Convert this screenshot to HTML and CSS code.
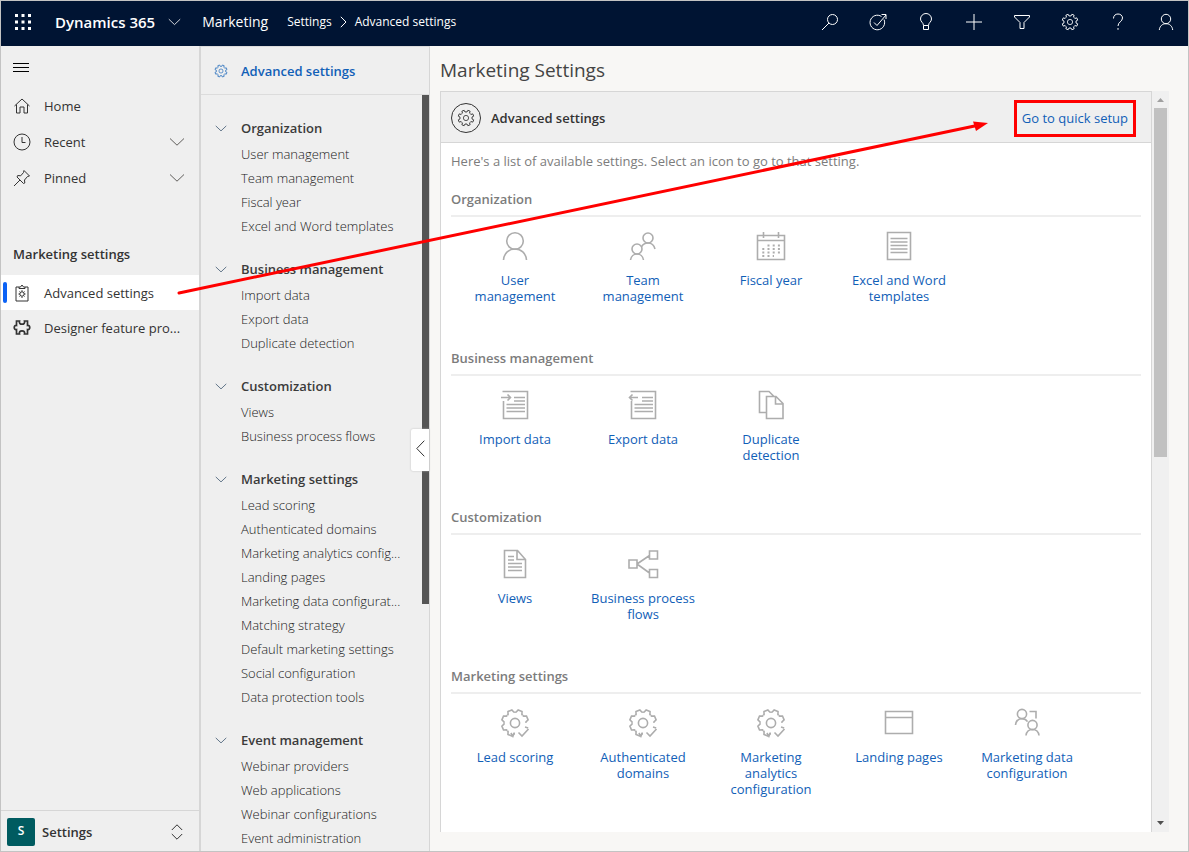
FILE: index.html
```html
<!DOCTYPE html>
<html lang="en">
<head>
<meta charset="utf-8">
<title>Advanced settings - Dynamics 365 Marketing</title>
<link rel="stylesheet" href="styles.css">
</head>
<body>
<svg class="sprite" aria-hidden="true">
  <defs>
    <path id="tooth" d="M-2.9-6.9-1.7-7.2-1.5-9.6H1.5L1.7-7.2 2.9-6.9"/>
    <path id="cog" d="M-4.1-10-3.1-10.6-2.1-13.3H2.1L3.1-10.6 4.1-10"/>
    <symbol id="i-gear" viewBox="-11 -11 22 22">
      <use href="#tooth" transform="rotate(22.5)"/><use href="#tooth" transform="rotate(67.5)"/><use href="#tooth" transform="rotate(112.5)"/><use href="#tooth" transform="rotate(157.5)"/><use href="#tooth" transform="rotate(202.5)"/><use href="#tooth" transform="rotate(247.5)"/><use href="#tooth" transform="rotate(292.5)"/><use href="#tooth" transform="rotate(337.5)"/>
      <circle r="3.2"/>
    </symbol>
    <symbol id="i-cog-check" viewBox="-15 -15 30 30">
      <use href="#cog" transform="rotate(22.5)"/><use href="#cog" transform="rotate(67.5)"/><use href="#cog" transform="rotate(202.5)"/><use href="#cog" transform="rotate(247.5)"/><use href="#cog" transform="rotate(292.5)"/><use href="#cog" transform="rotate(337.5)"/>
      <path d="M10 4.100 13.200 5M-4.100 10-2.100 13.300-.6 9.500M3.500 9.500 7 13 13.500 6"/>
      <circle r="4.6"/>
    </symbol>
    <symbol id="i-down" viewBox="0 0 16 8"><path d="M1 .5 8 7.2 15 .5"/></symbol>
    <symbol id="i-user" viewBox="0 0 30 30"><circle cx="15" cy="10" r="8.3"/><path d="M3.5 29C4 22 9 18 15 18s11 4 11.500 11"/></symbol>
    <symbol id="i-team" viewBox="0 0 30 30"><circle cx="20" cy="7" r="5"/><circle cx="9" cy="18" r="5"/><path d="M2.500 29c.5-4 3.500-6 6.500-6s6 2 6.500 6M13.500 16c1-2.500 3.500-4 6.500-4s6 2 7 6"/></symbol>
    <symbol id="i-calendar" viewBox="0 0 30 30"><path d="M1.500 4.500h27v24h-27zM1.500 9.500h27M7.500 1v6M22.500 1v6"/><path stroke-dasharray="2 3.200" stroke-width="2" d="M11.500 14.500H24M6.300 18H24M6.300 21.500H24M6.300 25H18"/></symbol>
    <symbol id="i-doc" viewBox="0 0 30 30"><path d="M3.500 1.500h23v27h-23zM6.500 7.500h17M6.500 11h17M6.500 14.500h17M6.500 18h17M6.500 21.500h17"/></symbol>
    <symbol id="i-import" viewBox="0 0 30 30"><path d="M2.500 1.500h25v27h-24V11M1 7.500h9M7.500 4.500l3 3-3 3M14 7.500h11M14 11h11M6.500 14.500H25M6.500 18H25M6.500 21.500H25"/></symbol>
    <symbol id="i-export" viewBox="0 0 30 30"><path d="M2.500 1.500h25v27h-24V11M2 7.500h8M4.500 4.500l-3 3 3 3M14 7.500h11M14 11h11M6.500 14.500H25M6.500 18H25M6.500 21.500H25"/></symbol>
    <symbol id="i-copy" viewBox="0 0 30 30"><path d="M10 22.500H3.500v-21H13l5 5M10.500 28.500v-22h9.500l7 7v15zM19.500 7v7H27"/></symbol>
    <symbol id="i-page" viewBox="0 0 30 30"><path d="M4.500 1.500h13l8 9v18h-21zM17 2v8.500h8M8 7.500h6M8 11h6M8 14.500h14M8 18h14M8 21.500h14"/></symbol>
    <symbol id="i-flow" viewBox="0 0 32 30"><path d="M2 11h8v8H2zM22.500 2h8v8h-8zM22.500 20.500h8v8h-8zM10 15l12.500-8.500M10 15l12.500 9"/></symbol>
    <symbol id="i-window" viewBox="0 0 30 30"><path d="M1.500 3.500h27v22h-27zM1.500 9.500h27"/></symbol>
    <symbol id="i-userdata" viewBox="0 0 30 30"><circle cx="10" cy="6" r="4.600"/><circle cx="20.500" cy="17" r="4.600"/><path d="M3.500 17c.5-4 3-6.300 6.500-6.300 2.500 0 4.500 1 5.500 3M14 27.500c.5-4 3-6 6.500-6s6 2 6.500 6M17.500 3.500h6.500v7"/></symbol>
  </defs>
</svg>

<header class="topbar">
  <button class="waffle" aria-label="App launcher"><svg width="16" height="16" viewBox="0 0 16 16"><path d="M0 0h3v3H0zM6.500 0h3v3h-3zM13 0h3v3h-3zM0 6.500h3v3H0zM6.500 6.500h3v3h-3zM13 6.500h3v3h-3zM0 13h3v3H0zM6.500 13h3v3h-3zM13 13h3v3h-3z" fill="currentColor"/></svg></button>
  <button class="brand">Dynamics 365 <svg class="line" width="13" height="8"><use href="#i-down"/></svg></button>
  <a class="app" href="#">Marketing</a>
  <nav class="crumbs" aria-label="Breadcrumb">
    <a href="#">Settings</a>
    <svg class="line" width="7" height="12" viewBox="0 0 7 12"><path d="M.8.800 6 6 .8 11.200"/></svg>
    <a href="#">Advanced settings</a>
  </nav>
  <div class="actions">
    <button aria-label="Search"><svg class="line" width="18" height="18" viewBox="0 0 18 18"><circle cx="11.500" cy="6.500" r="5"/><path d="M8 10 1 17"/></svg></button>
    <button aria-label="Assistant"><svg class="line" width="18" height="18" viewBox="0 0 18 18"><path d="M12.500 3.500A7.300 7.300 0 1 0 15 6.500M5 9.500l3 3L17 2M12.500 1.500H17V6"/></svg></button>
    <button aria-label="Tips"><svg class="line" width="18" height="18" viewBox="0 0 18 18"><path d="M6.500 12.500c0-3-3-3.500-3-6.500a5.500 5.500 0 0 1 11 0c0 3-3 3.500-3 6.500v4h-5v-4h5"/></svg></button>
    <button aria-label="New"><svg class="line" width="18" height="18" viewBox="0 0 18 18"><path d="M9 1v16M1 9h16"/></svg></button>
    <button aria-label="Filter"><svg class="line" width="18" height="18" viewBox="0 0 18 18"><path d="M1.500 2.500h15v1.500L11 9.500v6H7v-6L1.500 4z"/></svg></button>
    <button aria-label="Settings"><svg class="line gear" width="18" height="18"><use href="#i-gear"/></svg></button>
    <button aria-label="Help"><svg class="line" width="18" height="18" viewBox="0 0 18 18"><path d="M4.500 5.500C4.500 2.500 6.500 1 9 1s4.500 1.600 4.500 4c0 3.500-4.500 4-4.500 8M9 15v1.800"/></svg></button>
    <button aria-label="Account"><svg class="line" width="18" height="18" viewBox="0 0 18 18"><circle cx="9" cy="6" r="4.700"/><path d="M2.300 17c.4-4 3.200-6.300 6.700-6.300s6.300 2.300 6.700 6.300"/></svg></button>
  </div>
</header>

<div class="shell">
  <aside class="sitemap">
    <button class="burger" aria-label="Toggle navigation"><svg class="line" width="16" height="11" viewBox="0 0 16 11"><path d="M0 1.500h16M0 5.500h16M0 9.500h16"/></svg></button>
    <nav class="site-links">
      <a class="site-link" href="#"><svg class="line" width="18" height="18" viewBox="0 0 18 18"><path d="M1.500 9 9 2l7.500 7M3.500 7.500v8.500h3.500v-6h4v6h3.500V7.500"/></svg><span>Home</span></a>
      <a class="site-link" href="#"><svg class="line" width="18" height="18" viewBox="0 0 18 18"><circle cx="9" cy="9" r="8"/><path d="M9 4v5.500h3.500"/></svg><span>Recent</span><svg class="line soft" width="16" height="8"><use href="#i-down"/></svg></a>
      <a class="site-link" href="#"><svg class="line" width="18" height="18" viewBox="0 0 18 18"><path d="m11 1.500 5.500 5.500-2 .5-3 3.500.3 3-1.300.5L4 8l.7-1.500 3 .3L10.500 3.500zM7 11l-6 6"/></svg><span>Pinned</span><svg class="line soft" width="16" height="8"><use href="#i-down"/></svg></a>
    </nav>
    <h2 class="site-heading">Marketing settings</h2>
    <nav>
      <a class="site-link tight current" href="#" aria-current="page"><svg class="line" width="18" height="18" viewBox="0 0 18 18"><path d="M6 3H3v14h12V3h-3M6 4.500V3h1.500L9 1l1.500 2H12v1.500zM9 6.200v1.500M9 12.500V14M5.500 10H7M11 10h1.500M6.500 7.500l1 1M10.500 11.500l1 1M11.500 7.500l-1 1M7.500 11.500l-1 1"/><circle cx="9" cy="10" r="2.200"/></svg><span>Advanced settings</span></a>
      <a class="site-link tight" href="#"><svg class="line bold" width="18" height="18" viewBox="0 0 18 18"><path d="M3.500 2h3c-.5 2 .5 3.200 2.500 3.200S12 4 11.500 2h3v4.500c3-.8 3 4.800 0 4v4.500h-3c.5-2-.5-3.200-2.500-3.200S6 13 6.500 15h-3v-4.500c-3 .8-3-4.800 0-4z"/></svg><span>Designer feature pro...</span></a>
    </nav>
    <button class="area"><span class="area-badge">S</span><span class="area-name">Settings</span><svg class="line" width="12" height="16" viewBox="0 0 12 16"><path d="M.8 6 6 .8 11.200 6M.8 10 6 15.200 11.200 10"/></svg></button>
  </aside>

  <aside class="subnav">
    <a class="subnav-title" href="#"><svg class="line gear" width="14" height="14"><use href="#i-gear"/></svg>Advanced settings</a>
    <div class="subnav-body">
      <nav class="groups">
        <section class="group">
          <h3><svg class="line" width="12" height="7"><use href="#i-down"/></svg>Organization</h3>
          <a href="#">User management</a><a href="#">Team management</a><a href="#">Fiscal year</a><a href="#">Excel and Word templates</a>
        </section>
        <section class="group">
          <h3><svg class="line" width="12" height="7"><use href="#i-down"/></svg>Business management</h3>
          <a href="#">Import data</a><a href="#">Export data</a><a href="#">Duplicate detection</a>
        </section>
        <section class="group">
          <h3><svg class="line" width="12" height="7"><use href="#i-down"/></svg>Customization</h3>
          <a href="#">Views</a><a href="#">Business process flows</a>
        </section>
        <section class="group">
          <h3><svg class="line" width="12" height="7"><use href="#i-down"/></svg>Marketing settings</h3>
          <a href="#">Lead scoring</a><a href="#">Authenticated domains</a><a href="#">Marketing analytics config...</a><a href="#">Landing pages</a><a href="#">Marketing data configurat...</a><a href="#">Matching strategy</a><a href="#">Default marketing settings</a><a href="#">Social configuration</a><a href="#">Data protection tools</a>
        </section>
        <section class="group">
          <h3><svg class="line" width="12" height="7"><use href="#i-down"/></svg>Event management</h3>
          <a href="#">Webinar providers</a><a href="#">Web applications</a><a href="#">Webinar configurations</a><a href="#">Event administration</a>
        </section>
      </nav>
      <div class="dark-scroll"></div>
      <button class="collapse" aria-label="Collapse"><svg class="line" width="9" height="17" viewBox="0 0 9 17"><path d="M8.300.7.8 8.500l7.500 7.800"/></svg></button>
    </div>
  </aside>

  <main class="main">
    <h1>Marketing Settings</h1>
    <div class="viewport">
      <div class="panel">
        <div class="panel-head">
          <span class="ring"><svg class="line gear" width="18" height="18"><use href="#i-gear"/></svg></span>
          <h2>Advanced settings</h2>
          <a class="quick" href="#">Go to quick setup</a>
        </div>
        <div class="panel-body">
          <p class="intro">Here's a list of available settings. Select an icon to go to that setting.</p>
          <section class="tiles"><h3>Organization</h3>
            <div class="row">
              <a href="#"><svg width="30" height="30"><use href="#i-user"/></svg>User management</a>
              <a href="#"><svg width="30" height="30"><use href="#i-team"/></svg>Team management</a>
              <a href="#"><svg width="30" height="30"><use href="#i-calendar"/></svg>Fiscal year</a>
              <a href="#"><svg width="30" height="30"><use href="#i-doc"/></svg>Excel and Word templates</a>
            </div>
          </section>
          <section class="tiles"><h3>Business management</h3>
            <div class="row">
              <a href="#"><svg width="30" height="30"><use href="#i-import"/></svg>Import data</a>
              <a href="#"><svg width="30" height="30"><use href="#i-export"/></svg>Export data</a>
              <a href="#"><svg width="30" height="30"><use href="#i-copy"/></svg>Duplicate detection</a>
            </div>
          </section>
          <section class="tiles"><h3>Customization</h3>
            <div class="row">
              <a href="#"><svg width="30" height="30"><use href="#i-page"/></svg>Views</a>
              <a href="#"><svg width="32" height="30"><use href="#i-flow"/></svg>Business process flows</a>
            </div>
          </section>
          <section class="tiles"><h3>Marketing settings</h3>
            <div class="row">
              <a href="#"><svg width="30" height="30"><use href="#i-cog-check"/></svg>Lead scoring</a>
              <a href="#"><svg width="30" height="30"><use href="#i-cog-check"/></svg>Authenticated domains</a>
              <a href="#"><svg width="30" height="30"><use href="#i-cog-check"/></svg>Marketing analytics configuration</a>
              <a href="#"><svg width="30" height="30"><use href="#i-window"/></svg>Landing pages</a>
              <a href="#"><svg width="30" height="30"><use href="#i-userdata"/></svg>Marketing data configuration</a>
            </div>
          </section>
        </div>
      </div>
      <div class="scrollbar">
        <svg class="up" width="7" height="4" viewBox="0 0 7 4"><path d="M0 4 3.500 0 7 4z"/></svg>
        <div class="thumb"></div>
        <svg class="dn" width="7" height="4" viewBox="0 0 7 4"><path d="M0 0h7L3.500 4z"/></svg>
      </div>
    </div>
  </main>
</div>
<svg class="pointer" width="812" height="180" viewBox="0 0 812 180" aria-hidden="true"><path d="M2 174 800 6.500" stroke="#f00" stroke-width="3" stroke-linecap="round"/><path d="M811 4 796 2.500 799 12z" fill="#f00"/></svg>
</body>
</html>
```
FILE: styles.css
```css
* { box-sizing: border-box; }
body {
  margin: 0;
  height: 100vh;
  display: flex;
  flex-direction: column;
  position: relative;
  overflow: hidden;
  border: 1px solid #c3c3c3;
  background: #f8f7f5;
  color: #333;
  font: 13px/20px "Open Sans", "Noto Sans", sans-serif;
}
h1, h2, h3, p { margin: 0; font-weight: 600; font-size: 13px; }
a { color: inherit; text-decoration: none; }
button { border: 0; padding: 0; background: none; color: inherit; font: inherit; }
svg { flex: none; display: block; }
.sprite { position: absolute; width: 0; height: 0; }
.line { fill: none; stroke: currentColor; stroke-width: 1; }
.bold { stroke-width: 1.7; }
.soft { color: #605e5c; }

.topbar {
  flex: none;
  height: 45px;
  padding: 0 0 3px 14px;
  display: flex;
  align-items: center;
  background: #001433;
  color: #fff;
}
.waffle { margin-right: 24px; }
.brand { display: flex; align-items: center; gap: 13px; font-size: 15px; font-weight: 600; }
.app { margin-left: 21px; font-size: 14px; }
.crumbs { margin-left: 19px; display: flex; align-items: center; gap: 8px; font-size: 12px; }
.actions { margin-left: auto; height: 40px; display: flex; gap: 4px; }
.actions button { width: 44px; display: grid; place-items: center; }

.shell { flex: 1; min-height: 0; display: flex; }
.sitemap {
  flex: none;
  width: 200px;
  display: flex;
  flex-direction: column;
  background: #efefef;
  border-right: 2px solid #d6d6d6;
}
.burger { height: 42px; padding-left: 12px; text-align: left; color: #000; }
.site-link { height: 36px; padding: 0 14px 0 12px; display: flex; align-items: center; gap: 13px; }
.site-link span { flex: 1; white-space: nowrap; }
.tight { height: 35px; }
.current { background: #fff; position: relative; }
.current::before { content: ""; position: absolute; left: 2px; top: 7px; width: 4px; height: 21px; border-radius: 2px; background: #0b62f5; }
.site-heading { margin: 40px 0 3px; padding-left: 12px; line-height: 36px; }
.area {
  margin-top: auto;
  height: 41px;
  padding: 1px 16px 0 6px;
  display: flex;
  align-items: center;
  gap: 7px;
  border-top: 1px solid #d6d6d6;
  font-weight: 600;
}
.area-badge { width: 28px; height: 28px; border-radius: 2px; background: #005b60; color: #fff; font-size: 12px; line-height: 26px; }
.area-name { flex: 1; text-align: left; }

.subnav {
  flex: none;
  width: 229px;
  display: flex;
  flex-direction: column;
  background: #efefef;
  border-right: 1px solid #d6d6d6;
  border-top: 1px solid #dcdcdc;
}
.subnav-title {
  flex: none;
  height: 48px;
  padding: 0 0 0 13px;
  display: flex;
  align-items: center;
  gap: 13px;
  border-bottom: 1px solid #dcdcdc;
  color: #1160b7;
  font-weight: 600;
}
.subnav-body { flex: 1; min-height: 0; display: flex; position: relative; }
.groups { flex: 1; padding: 19px 0 0 14px; overflow: hidden; }
.group { margin-bottom: 17px; }
.group h3 { display: flex; align-items: center; gap: 14px; height: 28px; color: #3b3b3b; }
.group h3 svg { color: #5f7388; stroke-width: 1.3; }
.group a { display: block; padding-left: 26px; line-height: 24px; font-weight: 300; white-space: nowrap; color: #222; }
.dark-scroll { width: 7px; height: 509px; background: #555; }
.collapse {
  position: absolute;
  right: 0;
  top: 334px;
  width: 18px;
  height: 42px;
  padding-bottom: 4px;
  display: grid;
  place-items: center;
  background: #fff;
  border-radius: 2px 0 0 2px;
  box-shadow: 0 0 2px #bbb;
}

.main { flex: 1; min-width: 0; display: flex; flex-direction: column; padding: 0 19px 19px 10px; }
h1 { height: 45px; line-height: 48px; font-size: 19px; font-weight: 400; color: #444; }
.viewport { flex: 1; min-height: 0; display: flex; }
.panel {
  flex: 1;
  min-width: 0;
  display: flex;
  flex-direction: column;
  overflow: hidden;
  border: 1px solid #d6d6d6;
  border-bottom: 0;
  background: #fff;
}
.panel-head {
  flex: none;
  height: 51px;
  padding: 2px 15px 0 10px;
  display: flex;
  align-items: center;
  gap: 10px;
  background: #efefef;
  border-bottom: 1px solid #d6d6d6;
}
.ring { width: 30px; height: 30px; display: grid; place-items: center; border: 1px solid #333; border-radius: 50%; }
.quick { margin-left: auto; padding: 0 5px; line-height: 31px; border: 3px solid #f00; color: #1160b7; }
.panel-body { padding: 8px 10px 0; }
.intro { font-weight: 400; color: #7c7c7c; }
.tiles { height: 159px; padding-top: 18px; }
.tiles h3 { height: 28px; color: #7c7c7c; border-bottom: 2px solid #eee; }
.row { display: flex; flex-wrap: wrap; padding-top: 14px; }
.row a {
  width: 128px;
  padding: 0 8px;
  display: flex;
  flex-direction: column;
  align-items: center;
  gap: 11px;
  line-height: 16px;
  text-align: center;
  color: #1160b7;
}
.row svg { fill: none; stroke: #adadad; stroke-width: 1.6; }
.scrollbar { width: 17px; display: flex; flex-direction: column; align-items: center; background: #f0f0f0; }
.up { margin: 7px 0 6px; fill: #a0a0a0; }
.thumb { width: 13px; height: 349px; background: #c1c1c1; }
.dn { margin: auto 0 7px; fill: #505050; }
.pointer { position: absolute; left: 176px; top: 118px; fill: none; pointer-events: none; }
```
